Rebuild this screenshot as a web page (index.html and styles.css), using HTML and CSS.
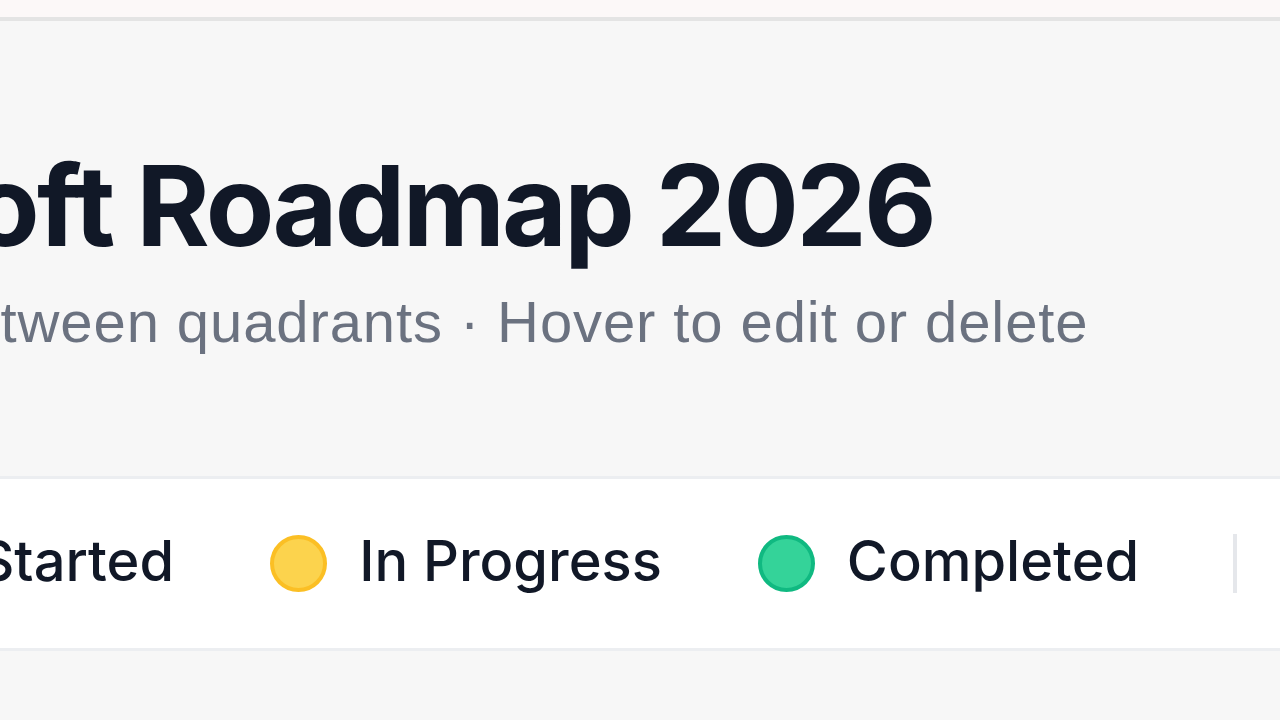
FILE: index.html
```html
<!DOCTYPE html>
<html lang="en">
<head>
<meta charset="utf-8">
<title>Microsoft Roadmap 2026</title>
<link rel="stylesheet" href="styles.css">
</head>
<body>
<div class="topbar"></div>
<header class="header">
  <h1 class="title">Microsoft Roadmap 2026</h1>
  <p class="subtitle">Drag tasks between quadrants · Hover to edit or delete</p>
</header>
<section class="legend">
  <div class="legend-inner">
    <div class="legend-item"><span class="dot dot-gray"></span><span class="label">Not Started</span></div>
    <div class="legend-item"><span class="dot dot-yellow"></span><span class="label">In Progress</span></div>
    <div class="legend-item"><span class="dot dot-green"></span><span class="label">Completed</span></div>
    <span class="divider"></span>
    <div class="legend-item"><span class="label">Filter</span></div>
  </div>
</section>
</body>
</html>
```
FILE: styles.css
```css
html, body {
  margin: 0;
  padding: 0;
  width: 1280px;
  height: 720px;
  overflow: hidden;
  background: #f7f7f7;
}
body {
  font-family: Inter, "Liberation Sans", sans-serif;
}
.topbar {
  height: 17px;
  background: #fcf8f8;
  border-bottom: 4px solid #e4e4e4;
}
.header {
  padding-top: 117px;
  white-space: nowrap;
}
.title {
  margin: 0 0 0 -387px;
  font-family: Inter, sans-serif;
  font-weight: 700;
  font-size: 112px;
  line-height: 134px;
  letter-spacing: -2.8px;
  color: #111827;
}
.subtitle {
  margin: 10px 0 0 -369px;
  font-family: "Liberation Sans", Arial, sans-serif;
  font-size: 58px;
  line-height: 80px;
  letter-spacing: 0.9px;
  color: #6b7280;
}
.legend {
  margin-top: 114px;
  background: #ffffff;
  border-top: 3px solid #eceef1;
  border-bottom: 3px solid #eceef1;
  height: 169px;
  display: flex;
  align-items: center;
  white-space: nowrap;
}
.legend-inner {
  display: flex;
  align-items: center;
  gap: 96px;
  margin-left: -221px;
}
.legend-item {
  display: flex;
  align-items: center;
  gap: 32px;
}
.dot {
  width: 57px;
  height: 57px;
  box-sizing: border-box;
  border-radius: 50%;
  border: 4px solid;
  flex: none;
}
.dot-gray { background: #d1d5db; border-color: #9ca3af; }
.dot-yellow { background: #fcd34d; border-color: #fbbf24; }
.dot-green { background: #34d399; border-color: #10b981; }
.label {
  font-size: 56px;
  font-weight: 500;
  color: #111827;
  line-height: 68px;
  margin-top: -5px;
}
.divider {
  width: 4px;
  height: 59px;
  margin-left: -2px;
  background: #e5e7eb;
  flex: none;
}
```
